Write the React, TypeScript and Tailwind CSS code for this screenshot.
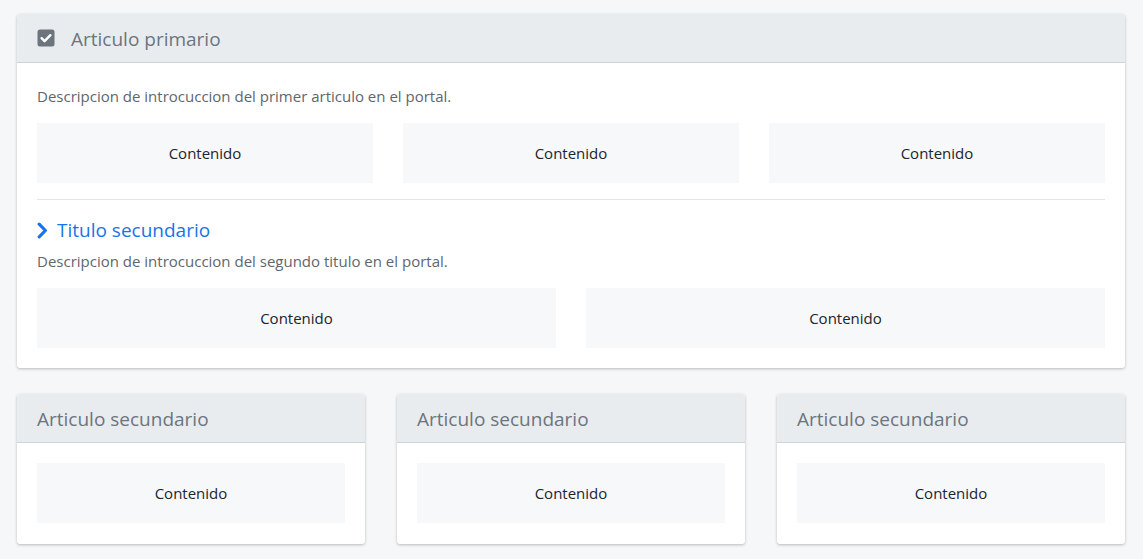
const Box = ({ label = 'Contenido' }: { label?: string }) => (
  <div className="h-[60px] flex items-center justify-center bg-[#f7f8fa] text-[15px] text-[#212529]">{label}</div>
);

function CheckIcon() {
  return (
    <svg width="18" height="18" viewBox="0 0 18 18" className="shrink-0">
      <rect x="0.5" y="0.5" width="17" height="17" rx="2.5" fill="#6c757d" />
      <path d="M4.6 9.2l3 3 5.8-6" fill="none" stroke="#fff" strokeWidth="2.4" strokeLinecap="round" strokeLinejoin="round" />
    </svg>
  );
}

function Chevron() {
  return (
    <svg width="11" height="17" viewBox="0 0 11 17" className="shrink-0">
      <path d="M2.2 2.2l6.2 6.3-6.2 6.3" fill="none" stroke="currentColor" strokeWidth="3.2" strokeLinecap="round" strokeLinejoin="round" />
    </svg>
  );
}

function Card({ title, icon, children }: { title: string; icon?: boolean; children: React.ReactNode }) {
  return (
    <section className="bg-white rounded-[3px] shadow-[0_1px_3px_rgba(0,0,0,0.25)] overflow-hidden">
      <header className="h-[49px] flex items-center gap-[16px] px-[20px] bg-[#e9ecef] border-b border-[#ced4da]">
        {icon && <CheckIcon />}
        <h2 className="text-[19px] text-[#6c757d] pt-[3px]">{title}</h2>
      </header>
      <div className="px-[20px] pt-[20px] pb-[21px]">{children}</div>
    </section>
  );
}

export default function App() {
  return (
    <main className="min-h-screen bg-[#f6f7f9] pl-[17px] pr-[18px] pt-[14px] pb-[14px] font-['Open_Sans',sans-serif]">
      <Card title="Articulo primario" icon>
        <p className="text-[15px] text-[#5f666d] leading-[22px] mt-[2px] mb-[16px]">
          Descripcion de introcuccion del primer articulo en el portal.
        </p>
        <div className="grid grid-cols-3 gap-[30px]">
          <Box />
          <Box />
          <Box />
        </div>
        <hr className="border-0 border-t border-[#e4e5e7] mt-[16px] mb-[17px]" />
        <div className="flex items-center gap-[9px] text-[#1a73e8]">
          <Chevron />
          <h3 className="text-[19px] leading-[26px]">Titulo secundario</h3>
        </div>
        <p className="text-[15px] text-[#5f666d] leading-[22px] mt-[7px] mb-[16px]">
          Descripcion de introcuccion del segundo titulo en el portal.
        </p>
        <div className="grid grid-cols-2 gap-[30px] -mb-px">
          <Box />
          <Box />
        </div>
      </Card>
      <div className="grid grid-cols-3 gap-[32px] mt-[26px]">
        {[0, 1, 2].map((i) => (
          <Card key={i} title="Articulo secundario">
            <Box />
          </Card>
        ))}
      </div>
    </main>
  );
}
